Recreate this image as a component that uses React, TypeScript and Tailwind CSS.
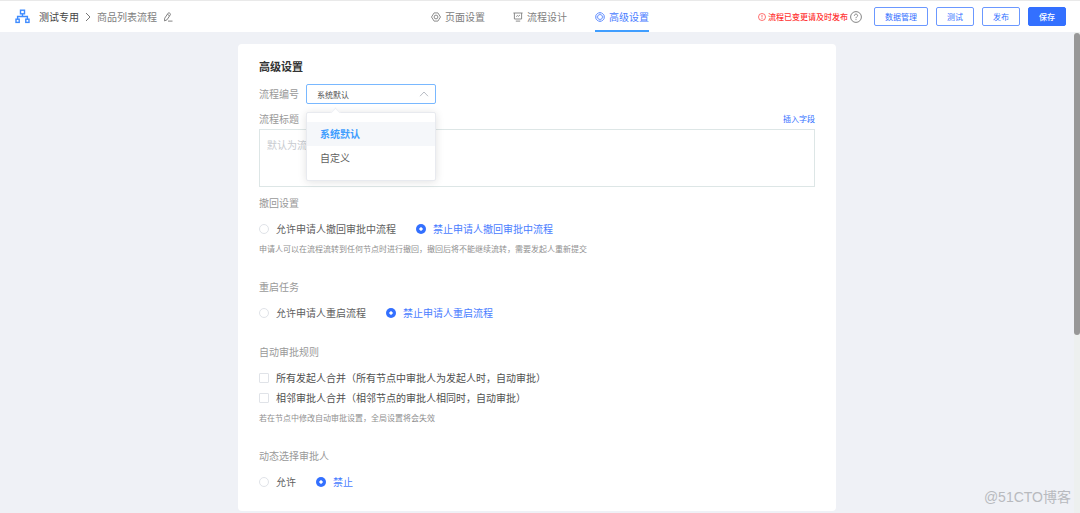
import React, { useState } from 'react';

type Choice = { value: string; label: string };

const NUMBER_OPTIONS = ['系统默认', '自定义'];

function FlowIcon() {
  return (
    <svg className="size-[15px] text-[#3e8bff]" viewBox="0 0 15 15" fill="none" stroke="currentColor" strokeWidth="1.4" aria-hidden="true">
      <rect x="5.5" y="1.2" width="4" height="3.6" />
      <rect x="1" y="10.2" width="3.2" height="3.2" />
      <rect x="10.8" y="10.2" width="3.2" height="3.2" />
      <path d="M7.5 5v2.5M2.6 10V7.5h9.8V10" />
    </svg>
  );
}

function ChevronIcon({ className, d }: { className: string; d: string }) {
  return (
    <svg className={className} viewBox="0 0 10 10" fill="none" stroke="currentColor" aria-hidden="true">
      <path d={d} />
    </svg>
  );
}

function EditIcon() {
  return (
    <svg className="size-[10px]" viewBox="0 0 10 10" fill="none" stroke="currentColor" strokeWidth="0.9" aria-hidden="true">
      <path d="M1.700 6.200 5.100 1.200Q5.700.5 6.500 1L7.100 1.400Q7.800 2 7.300 2.800L4 7.800 1.500 8.900ZM4.400 2.300 6.500 3.800M5 9.100h4.500" />
    </svg>
  );
}

function HexIcon() {
  return (
    <svg className="size-[10px]" viewBox="0 0 10 10" fill="none" stroke="currentColor" strokeWidth="0.9" aria-hidden="true">
      <path d="M3.100.9h3.800l2.600 4.100-2.600 4.100H3.100L.5 5Z" strokeLinejoin="round" />
      <circle cx="5" cy="5" r="1.900" />
    </svg>
  );
}

function BoardIcon() {
  return (
    <svg className="size-[10px]" viewBox="0 0 10 10" fill="none" stroke="currentColor" strokeWidth="0.9" aria-hidden="true">
      <path d="M.4 1h9.2M1.4 1v6h7.2V1M3.2 4.6l1.300-1 1 .7 1.400-1.200M2.800 9.100h4.400" />
    </svg>
  );
}

function BadgeIcon() {
  return (
    <svg className="size-[10px]" viewBox="0 0 10 10" fill="none" stroke="currentColor" strokeWidth="0.8" aria-hidden="true">
      <path d="M3.6.9Q5 .2 6.4.9L8 1.900Q9.200 2.800 9.300 4.200v1.600Q9.200 7.200 8 8.100l-1.600 1Q5 9.800 3.600 9.100L2 8.100Q.8 7.200.7 5.800V4.200Q.8 2.800 2 1.900Z" />
      <circle cx="5" cy="5" r="2.500" />
      <path d="M5 .6v1.600M5 7.800v1.600M.7 5h1.500M7.800 5h1.500" strokeWidth="0.5" />
    </svg>
  );
}

function AlertIcon() {
  return (
    <svg className="size-2" viewBox="0 0 8 8" fill="none" stroke="currentColor" strokeWidth="0.7" aria-hidden="true">
      <circle cx="4" cy="4" r="3.5" />
      <path d="M4 2v2.500M4 5.200V6" />
    </svg>
  );
}

function HelpIcon() {
  return (
    <svg className="size-3" viewBox="0 0 12 12" fill="none" stroke="currentColor" strokeWidth="0.9" aria-hidden="true">
      <circle cx="6" cy="6" r="5.4" />
      <path d="M4.4 4.8C4.4 3.7 5.1 3.1 6 3.1s1.6.6 1.6 1.5C7.6 5.700 6 5.800 6 7.200M6 8.200v.9" />
    </svg>
  );
}

function Tab({ icon, label, active = false }: { icon: React.ReactNode; label: string; active?: boolean }) {
  return (
    <a
      href="#"
      aria-current={active ? 'page' : undefined}
      className={
        active
          ? 'flex items-center gap-1 border-y-2 border-t-transparent border-b-[#409eff] text-[#4a7dff]'
          : 'flex items-center gap-1 border-y-2 border-transparent text-[#808080]'
      }
    >
      {icon}
      {label}
    </a>
  );
}

function HeaderButton({ label, primary = false }: { label: string; primary?: boolean }) {
  return (
    <button
      type="button"
      className={
        primary
          ? 'flex h-[19px] items-center rounded-xs border border-[#3370ff] bg-[#3370ff] px-2.5 text-[8px] font-medium text-white'
          : 'flex h-[19px] items-center rounded-xs border border-[#6b98ff] bg-white px-2.5 text-[8px] text-[#3370ff]'
      }
    >
      {label}
    </button>
  );
}

function RadioRow({ name, choices, initial }: { name: string; choices: Choice[]; initial: string }) {
  const [value, setValue] = useState(initial);
  return (
    <div className="mt-1.5 flex h-5 items-center gap-5">
      {choices.map((choice) => (
        <label key={choice.value} className="flex items-center gap-[7px] text-[#606060] has-checked:text-[#4a7dff]">
          <input
            type="radio"
            name={name}
            value={choice.value}
            checked={value === choice.value}
            onChange={() => setValue(choice.value)}
            className="size-2.5 appearance-none rounded-full border border-[#e0e3e8] bg-white checked:border-0 checked:bg-[radial-gradient(circle_closest-side,white_26%,#3370ff_40%)]"
          />
          {choice.label}
        </label>
      ))}
    </div>
  );
}

function CheckRow({ label }: { label: string }) {
  return (
    <label className="flex h-5 items-center gap-[7px] text-[#505050]">
      <input
        type="checkbox"
        className="size-2.5 appearance-none rounded-[1px] border border-[#e0e3e8] bg-white checked:border-[#3370ff] checked:bg-[#3370ff]"
      />
      {label}
    </label>
  );
}

function Section({ title, children }: { title: string; children: React.ReactNode }) {
  return (
    <section>
      <h2 className="h-5 text-[#999]">{title}</h2>
      {children}
    </section>
  );
}

function Hint({ children }: { children: React.ReactNode }) {
  return <p className="text-[8px] leading-[19px] text-[#909090]">{children}</p>;
}

function NumberSelect() {
  const [selected, setSelected] = useState(NUMBER_OPTIONS[0]);
  return (
    <div className="relative w-[130px]">
      <select
        id="flow-number"
        value={selected}
        onChange={(event) => setSelected(event.target.value)}
        className="block h-5 w-full appearance-none rounded-xs border border-[#79b8ff] bg-white px-2.5 text-[8px] text-[#505050] outline-none"
      >
        {NUMBER_OPTIONS.map((option) => (
          <option key={option}>{option}</option>
        ))}
      </select>
      <ChevronIcon className="pointer-events-none absolute top-[5px] right-[7px] size-2.5 text-[#b9bdc5]" d="M1 7.200 5 3l4 4.200" />
      <div className="absolute top-full left-0 z-10 mt-2 w-full rounded-xs border border-[#e8eaef] bg-white pt-[9px] pb-2.5 shadow-[0_1px_8px_rgba(0,0,0,0.12)]">
        <span className="absolute -top-1 left-[25px] size-[7px] rotate-45 border-t border-l border-[#eef0f4] bg-white" />
        <ul role="listbox" aria-label="流程编号">
          {NUMBER_OPTIONS.map((option) => (
            <li
              key={option}
              role="option"
              aria-selected={option === selected}
              onClick={() => setSelected(option)}
              className="h-6 cursor-pointer px-[13px] leading-6 text-[#606060] aria-selected:bg-[#f5f7fa] aria-selected:font-bold aria-selected:text-[#409eff]"
            >
              {option}
            </li>
          ))}
        </ul>
      </div>
    </div>
  );
}

export default function App() {
  return (
    <div className="relative flex min-h-screen flex-col bg-[#eff1f6] font-['Noto_Sans_CJK_SC',sans-serif] text-[10px] leading-5">
      <header className="grid h-8 grid-cols-[1fr_auto_1fr] border-t border-[#e9e9e9] bg-white">
        <div className="flex items-center pl-[15px]">
          <FlowIcon />
          <span className="ml-[9px] text-[#444]">测试专用</span>
          <ChevronIcon className="mx-1 size-2.5 text-[#777]" d="M3 1l4 4-4 4" />
          <span className="text-[#808080]">商品列表流程</span>
          <button type="button" aria-label="编辑" className="ml-1.5 text-[#777]">
            <EditIcon />
          </button>
        </div>
        <nav className="flex gap-7">
          <Tab icon={<HexIcon />} label="页面设置" />
          <Tab icon={<BoardIcon />} label="流程设计" />
          <Tab icon={<BadgeIcon />} label="高级设置" active />
        </nav>
        <div className="flex items-center justify-end gap-2 pr-3.5">
          <div className="mr-1 flex items-center gap-0.5 text-[8px] font-medium text-[#ff3535]">
            <AlertIcon />
            <span>流程已变更请及时发布</span>
            <button type="button" aria-label="帮助" className="text-[#777]">
              <HelpIcon />
            </button>
          </div>
          <HeaderButton label="数据管理" />
          <HeaderButton label="测试" />
          <HeaderButton label="发布" />
          <HeaderButton label="保存" primary />
        </div>
      </header>

      <div className="flex flex-1">
        <main className="flex flex-1 justify-center pt-3 pb-0.5">
          <form className="w-full max-w-[598px] rounded-sm bg-white px-[21px] pt-3 pb-[19px]">
            <h1 className="text-[11px] leading-5 font-bold text-[#333]">高级设置</h1>

            <div className="mt-2 flex items-center gap-[7px]">
              <label htmlFor="flow-number" className="text-[#999]">流程编号</label>
              <NumberSelect />
            </div>

            <div className="mt-[5px] flex justify-between">
              <label htmlFor="flow-title" className="text-[#999]">流程标题</label>
              <button type="button" className="text-[8px] text-[#3370ff]">插入字段</button>
            </div>
            <textarea
              id="flow-title"
              placeholder="默认为流程名称"
              className="block h-[58px] w-full resize-none border border-[#dde6e6] px-[7px] py-[5px] outline-none placeholder:text-[#c8cbd0]"
            />

            <div className="mt-1.5 flex flex-col gap-[19px]">
              <Section title="撤回设置">
                <RadioRow
                  name="withdraw"
                  initial="deny"
                  choices={[
                    { value: 'allow', label: '允许申请人撤回审批中流程' },
                    { value: 'deny', label: '禁止申请人撤回审批中流程' },
                  ]}
                />
                <Hint>申请人可以在流程流转到任何节点时进行撤回，撤回后将不能继续流转，需要发起人重新提交</Hint>
              </Section>

              <Section title="重启任务">
                <RadioRow
                  name="restart"
                  initial="deny"
                  choices={[
                    { value: 'allow', label: '允许申请人重启流程' },
                    { value: 'deny', label: '禁止申请人重启流程' },
                  ]}
                />
              </Section>

              <Section title="自动审批规则">
                <div className="mt-1.5">
                  <CheckRow label="所有发起人合并（所有节点中审批人为发起人时，自动审批）" />
                  <CheckRow label="相邻审批人合并（相邻节点的审批人相同时，自动审批）" />
                </div>
                <Hint>若在节点中修改自动审批设置，全局设置将会失效</Hint>
              </Section>

              <Section title="动态选择审批人">
                <RadioRow
                  name="approver"
                  initial="deny"
                  choices={[
                    { value: 'allow', label: '允许' },
                    { value: 'deny', label: '禁止' },
                  ]}
                />
              </Section>
            </div>
          </form>
        </main>
        <div className="w-1.5 bg-[#edf0ef] pt-px" aria-hidden="true">
          <div className="h-[63%] rounded-full bg-[#979797]" />
        </div>
      </div>

      <span className="absolute right-[9px] bottom-1.5 font-['Liberation_Sans','Noto_Sans_CJK_SC',sans-serif] text-[14px] text-[#b8babe]">
        @51CTO博客
      </span>
    </div>
  );
}
